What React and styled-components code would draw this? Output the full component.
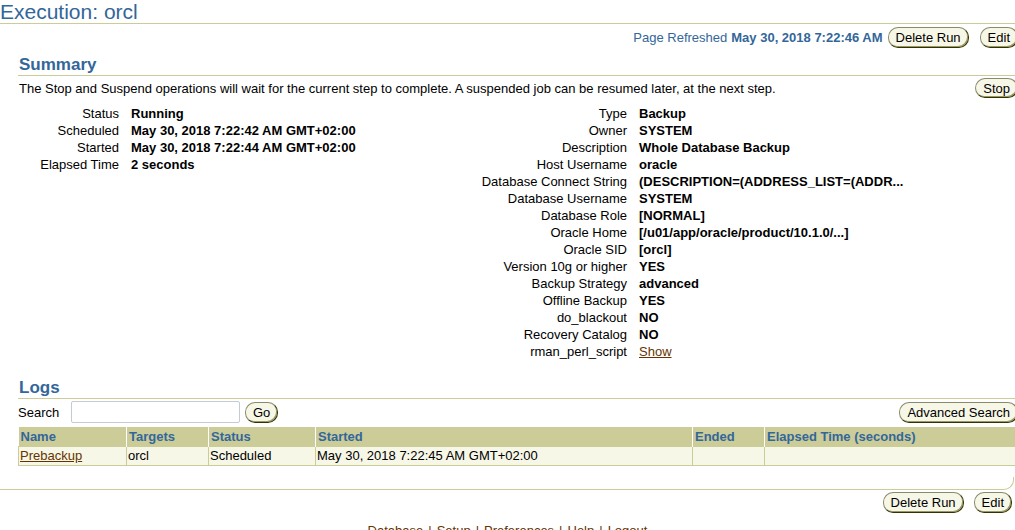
import React from 'react';
import styled, { createGlobalStyle } from 'styled-components';

const GlobalStyle = createGlobalStyle`
  html, body {
    margin: 0;
    padding: 0;
    background: #fff;
    overflow: hidden;
  }
  body {
    font-family: "Liberation Sans", Arial, sans-serif;
    font-size: 13px;
    color: #000;
  }
`;

const Page = styled.div`
  width: 1018px;
`;

const PageTitle = styled.h1`
  margin: 0;
  font-size: 21px;
  font-weight: normal;
  line-height: 23px;
  color: #336699;
  border-bottom: 1px solid #cccc99;
`;

const RefreshBar = styled.div`
  display: flex;
  justify-content: flex-end;
  align-items: center;
  padding: 3px 0;
  gap: 5px;
  color: #336699;
`;

const RefreshDate = styled.b`
  margin-left: 4px;
`;

const Button = styled.button`
  height: ${(p) => (p.small ? 20 : 21)}px;
  padding: 0 7px;
  margin-left: ${(p) => p.gap || 0}px;
  border: 1px solid #8a8a6a;
  border-right-color: #333300;
  border-bottom-color: #333300;
  border-radius: 10px;
  background: #f7f7e7;
  box-shadow: inset -1px -1px 0 #999966;
  font-family: "Liberation Sans", Arial, sans-serif;
  font-size: 13px;
  color: #000;
  white-space: nowrap;
`;

const Content = styled.div`
  padding-left: 18px;
`;

const SectionHeading = styled.h2`
  margin: ${(p) => p.top}px 0 0;
  padding-left: 1px;
  font-size: 17px;
  font-weight: bold;
  line-height: 20px;
  color: #336699;
  border-bottom: 1px solid #cccc99;
`;

const InfoRow = styled.div`
  display: flex;
  justify-content: space-between;
  align-items: center;
  padding: 2px 0 3px 1px;
`;

const Details = styled.div`
  display: flex;
  margin-top: 4px;
`;

const DetailTable = styled.div`
  width: ${(p) => p.width}px;
  display: grid;
  grid-template-columns: ${(p) => p.labelWidth}px auto;
  column-gap: 12px;
  line-height: 17px;
  align-content: start;
`;

const Label = styled.div`
  text-align: right;
  white-space: nowrap;
`;

const Value = styled.div`
  font-weight: bold;
  white-space: nowrap;
`;

const Link = styled.a`
  color: #663300;
  text-decoration: underline;
  font-weight: normal;
`;

const SearchRow = styled.div`
  display: flex;
  align-items: center;
  padding: 2px 0;
`;

const SearchLabel = styled.span`
  width: 53px;
`;

const SearchInput = styled.input`
  width: 165px;
  height: 18px;
  margin: 0 5px 0 0;
  padding: 1px;
  border: 1px solid #c3cbd3;
  border-radius: 2px;
  font-family: "Liberation Sans", Arial, sans-serif;
  font-size: 13px;
`;

const Spacer = styled.div`
  flex: 1;
`;

const LogTable = styled.table`
  width: 1000px;
  margin-top: 2px;
  border-collapse: collapse;
  table-layout: fixed;
`;

const Th = styled.th`
  box-sizing: border-box;
  width: ${(p) => p.w}px;
  height: 19px;
  padding: 0 2px;
  background: #cccc99;
  color: #336699;
  font-size: 13px;
  font-weight: bold;
  text-align: left;
  border-left: 1px solid #fff;
  &:first-child {
    border-left: none;
  }
`;

const Td = styled.td`
  height: 18px;
  padding: 0 1px;
  background: #f7f7e7;
  border: 1px solid #cccc99;
  font-size: 13px;
  white-space: nowrap;
`;

const ContentEnd = styled.div`
  width: 1013px;
  height: 12px;
  margin-top: 11px;
  border-bottom: 1px solid #cccc99;
  border-right: 1px solid #cccc99;
  border-bottom-right-radius: 10px;
`;

const BottomActions = styled.div`
  width: 1012px;
  display: flex;
  justify-content: flex-end;
  padding: 2px 0;
`;

const Footer = styled.div`
  width: 1015px;
  margin-top: 8px;
  text-align: center;
  line-height: 15px;
  color: #663300;
`;

const FooterLink = styled.a`
  color: #663300;
  text-decoration: none;
`;

const FooterSep = styled.span`
  margin: 0 5px;
`;

const summaryLeft = [
  ['Status', 'Running'],
  ['Scheduled', 'May 30, 2018 7:22:42 AM GMT+02:00'],
  ['Started', 'May 30, 2018 7:22:44 AM GMT+02:00'],
  ['Elapsed Time', '2 seconds'],
];

const summaryRight = [
  ['Type', 'Backup'],
  ['Owner', 'SYSTEM'],
  ['Description', 'Whole Database Backup'],
  ['Host Username', 'oracle'],
  ['Database Connect String', '(DESCRIPTION=(ADDRESS_LIST=(ADDR...'],
  ['Database Username', 'SYSTEM'],
  ['Database Role', '[NORMAL]'],
  ['Oracle Home', '[/u01/app/oracle/product/10.1.0/...]'],
  ['Oracle SID', '[orcl]'],
  ['Version 10g or higher', 'YES'],
  ['Backup Strategy', 'advanced'],
  ['Offline Backup', 'YES'],
  ['do_blackout', 'NO'],
  ['Recovery Catalog', 'NO'],
  ['rman_perl_script', null],
];

const columns = [
  ['Name', 108],
  ['Targets', 82],
  ['Status', 107],
  ['Started', 377],
  ['Ended', 72],
  ['Elapsed Time (seconds)', 254],
];

const footerLinks = ['Database', 'Setup', 'Preferences', 'Help', 'Logout'];

function App() {
  return (
    <Page>
      <GlobalStyle />
      <PageTitle>Execution: orcl</PageTitle>
      <RefreshBar>
        <span>
          Page Refreshed<RefreshDate>May 30, 2018 7:22:46 AM</RefreshDate>
        </span>
        <Button>Delete Run</Button>
        <Button gap={6}>Edit</Button>
      </RefreshBar>

      <Content>
        <SectionHeading top={4}>Summary</SectionHeading>
        <InfoRow>
          <span>
            The Stop and Suspend operations will wait for the current step to complete. A suspended job can be
            resumed later, at the next step.
          </span>
          <Button small>Stop</Button>
        </InfoRow>

        <Details>
          <DetailTable width={452} labelWidth={101}>
            {summaryLeft.map(([label, value]) => (
              <React.Fragment key={label}>
                <Label>{label}</Label>
                <Value>{value}</Value>
              </React.Fragment>
            ))}
          </DetailTable>
          <DetailTable width={548} labelWidth={157}>
            {summaryRight.map(([label, value]) => (
              <React.Fragment key={label}>
                <Label>{label}</Label>
                <Value>{value === null ? <Link href="#">Show</Link> : value}</Value>
              </React.Fragment>
            ))}
          </DetailTable>
        </Details>

        <SectionHeading top={18}>Logs</SectionHeading>
        <SearchRow>
          <SearchLabel>Search</SearchLabel>
          <SearchInput type="text" />
          <Button>Go</Button>
          <Spacer />
          <Button>Advanced Search</Button>
        </SearchRow>

        <LogTable>
          <thead>
            <tr>
              {columns.map(([name, w]) => (
                <Th key={name} w={w}>{name}</Th>
              ))}
            </tr>
          </thead>
          <tbody>
            <tr>
              <Td><Link href="#">Prebackup</Link></Td>
              <Td>orcl</Td>
              <Td>Scheduled</Td>
              <Td>May 30, 2018 7:22:45 AM GMT+02:00</Td>
              <Td></Td>
              <Td></Td>
            </tr>
          </tbody>
        </LogTable>
      </Content>

      <ContentEnd />
      <BottomActions>
        <Button>Delete Run</Button>
        <Button gap={10}>Edit</Button>
      </BottomActions>

      <Footer>
        {footerLinks.map((name, i) => (
          <React.Fragment key={name}>
            {i > 0 && <FooterSep>|</FooterSep>}
            <FooterLink href="#">{name}</FooterLink>
          </React.Fragment>
        ))}
      </Footer>
    </Page>
  );
}

export default App;
